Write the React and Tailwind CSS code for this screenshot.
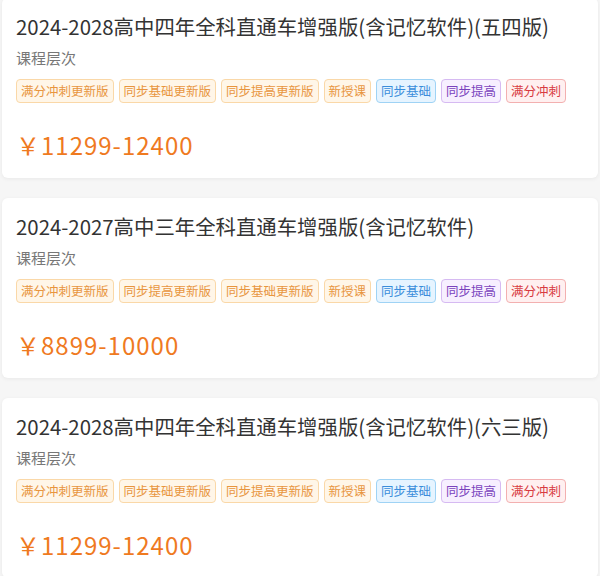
const courses = [
  {
    title: "2024-2028高中四年全科直通车增强版(含记忆软件)(五四版)",
    tags: ["满分冲刺更新版", "同步基础更新版", "同步提高更新版", "新授课", "同步基础", "同步提高", "满分冲刺"],
    price: "11299-12400",
  },
  {
    title: "2024-2027高中三年全科直通车增强版(含记忆软件)",
    tags: ["满分冲刺更新版", "同步提高更新版", "同步基础更新版", "新授课", "同步基础", "同步提高", "满分冲刺"],
    price: "8899-10000",
  },
  {
    title: "2024-2028高中四年全科直通车增强版(含记忆软件)(六三版)",
    tags: ["满分冲刺更新版", "同步基础更新版", "同步提高更新版", "新授课", "同步基础", "同步提高", "满分冲刺"],
    price: "11299-12400",
  },
];

const tagStyle = (tag) => {
  if (tag === "同步基础") return "bg-[#e6f4ff] border-[#9fd3f5] text-[#3a8ddb]";
  if (tag === "同步提高") return "bg-[#f7efff] border-[#d6baf2] text-[#7a42bd]";
  if (tag === "满分冲刺") return "bg-[#fff0f0] border-[#f3b0b0] text-[#d83a40]";
  return "bg-[#fff6e8] border-[#fad8a8] text-[#e8953e]";
};

const CourseCard = ({ course }) => (
  <div className="h-[180px] mx-[2px] bg-white rounded-md shadow-[0_1px_4px_rgba(0,0,0,0.06)] px-[14px]">
    <div className="pt-[14px] text-[20.4px] leading-[28px] text-[#333] whitespace-nowrap">{course.title}</div>
    <div className="mt-[7px] text-[15px] leading-[22px] text-[#777]">课程层次</div>
    <div className="mt-[10px] flex gap-[5px]">
      {course.tags.map((tag, i) => (
        <span
          key={i}
          className={`h-[24px] px-[4px] flex items-center rounded-[4px] border text-[12.5px] leading-none whitespace-nowrap ${tagStyle(tag)}`}
        >
          {tag}
        </span>
      ))}
    </div>
    <div className="mt-[26px] text-[24px] leading-[32px] tracking-[1px] text-[#ef7a1f]">
      ￥{course.price}
    </div>
  </div>
);

export default function App() {
  return (
    <div
      className="min-h-screen bg-[#f6f6f6] overflow-hidden"
      style={{ fontFamily: '"Noto Sans CJK SC", "Noto Sans", sans-serif' }}
    >
      <div className="-mt-[2px] flex flex-col gap-5">
        {courses.map((c, i) => (
          <CourseCard key={i} course={c} />
        ))}
      </div>
    </div>
  );
}
